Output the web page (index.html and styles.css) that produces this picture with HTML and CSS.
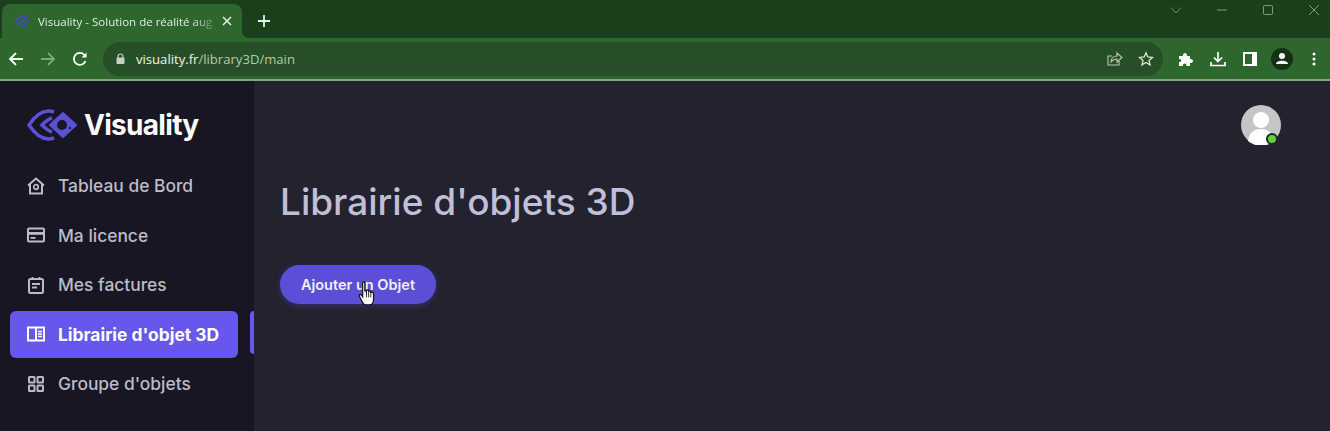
FILE: index.html
```html
<!DOCTYPE html>
<html lang="fr">
<head>
<meta charset="utf-8">
<title>Visuality</title>
<link rel="stylesheet" href="styles.css">
</head>
<body>
<div class="browser">
  <div class="tabstrip">
    <div class="tab">
      <svg class="favicon" width="16" height="12" viewBox="0 0 32 24"><path d="M2 12 C8 3 16 1 24 3 M2 12 C8 21 16 23 24 21" fill="none" stroke="#3f4fae" stroke-width="4"/><path d="M12 12 L21 5 L30 12 L21 19 Z" fill="#3f4fae"/><circle cx="21" cy="12" r="3" fill="#2d672d"/></svg>
      <span class="tab-title">Visuality - Solution de réalité aug</span>
      <svg class="tab-close" width="10" height="10" viewBox="0 0 10 10"><path d="M1 1 L9 9 M9 1 L1 9" stroke="#e8efe8" stroke-width="1.5"/></svg>
    </div>
    <svg class="newtab" width="14" height="14" viewBox="0 0 14 14"><path d="M7 1 V13 M1 7 H13" stroke="#e8efe8" stroke-width="1.8"/></svg>
    <div class="winctl">
      <svg width="12" height="12" viewBox="0 0 12 12"><path d="M1 3.500 L6 9 L11 3.500" fill="none" stroke="#6f8c6f" stroke-width="1"/></svg>
      <svg width="12" height="12" viewBox="0 0 12 12"><path d="M1 6 H11" stroke="#7f9c7f" stroke-width="1"/></svg>
      <svg width="12" height="12" viewBox="0 0 12 12"><rect x="1.500" y="1.500" width="9" height="9" rx="1" fill="none" stroke="#7f9c7f" stroke-width="1"/></svg>
      <svg width="12" height="12" viewBox="0 0 12 12"><path d="M1 1 L11 11 M11 1 L1 11" stroke="#7f9c7f" stroke-width="1"/></svg>
    </div>
  </div>
  <div class="toolbar">
    <div class="nav">
      <svg width="16" height="16" viewBox="0 0 16 16"><path d="M15 8 H2 M8 2 L2 8 L8 14" fill="none" stroke="#fff" stroke-width="1.800"/></svg>
      <svg width="16" height="16" viewBox="0 0 16 16"><path d="M1 8 H14 M8 2 L14 8 L8 14" fill="none" stroke="#7fa67f" stroke-width="1.800"/></svg>
      <svg width="16" height="16" viewBox="0 0 16 16"><path d="M13.500 10 A6 6 0 1 1 12.500 4 L14 5.500" fill="none" stroke="#fff" stroke-width="1.800"/><path d="M14.500 1.500 V6.500 H9.500 Z" fill="#fff"/></svg>
    </div>
    <div class="omnibox">
      <svg class="lock" width="9" height="11" viewBox="0 0 9 11"><path d="M2 5 V3.500 A2.500 2.500 0 0 1 7 3.500 V5" fill="none" stroke="#c4d2c4" stroke-width="1.200"/><rect x="0.500" y="4.500" width="8" height="6.500" rx="1" fill="#c4d2c4"/></svg>
      <span class="url"><span class="host">visuality.fr</span>/library3D/main</span>
      <svg class="omni-right" width="17" height="16" viewBox="0 0 17 16"><path d="M13 10 V14 H2 V5 H6 M5 11 C5 7 8 5 11 5 V2 L16 6.500 L11 11 V8 C8.500 8 6.500 9 5 11 Z" fill="none" stroke="#b9cbb9" stroke-width="1.100"/></svg>
      <svg class="omni-right star" width="16" height="16" viewBox="0 0 16 16"><path d="M8 1.800 L9.800 6 L14.400 6.400 L11 9.400 L12 13.900 L8 11.500 L4 13.900 L5 9.400 L1.600 6.400 L6.200 6 Z" fill="none" stroke="#dbe6db" stroke-width="1.300"/></svg>
    </div>
    <div class="tools">
      <span class="tool"><svg width="16" height="16" viewBox="0 0 16 16"><path d="M1 5 H5 C4.500 1 9.500 1 9 5 H12 V8 C16 7.500 16 12.500 12 12 V15 H8.500 C9 11.500 4.500 11.500 5 15 H1 V11 C4 11.500 4 7.500 1 8 Z" fill="#fff"/></svg></span>
      <span class="tool"><svg width="16" height="16" viewBox="0 0 16 16"><path d="M8 1 V10 M4 6.500 L8 10.500 L12 6.500 M1 11 V14.500 H15 V11" fill="none" stroke="#fff" stroke-width="1.700"/></svg></span>
      <span class="tool"><svg width="14" height="14" viewBox="0 0 14 14"><path d="M0 0 H14 V14 H0 Z M2 2 V12 H9 V2 Z" fill="#fff" fill-rule="evenodd"/></svg></span>
      <span class="tool"><svg width="22" height="22" viewBox="0 0 22 22"><circle cx="11" cy="11" r="11" fill="#143214"/><circle cx="11" cy="8" r="3" fill="#fff"/><path d="M5 16 C5 11.500 17 11.500 17 16 Z" fill="#fff"/></svg></span>
      <span class="tool"><svg width="4" height="14" viewBox="0 0 4 14"><circle cx="2" cy="2" r="1.500" fill="#fff"/><circle cx="2" cy="7" r="1.500" fill="#fff"/><circle cx="2" cy="12" r="1.500" fill="#fff"/></svg></span>
    </div>
  </div>
  <div class="app">
    <aside class="sidebar">
      <div class="brand">
        <svg width="50" height="32" viewBox="0 0 50 32"><path d="M27 3 C16 -1 8 7 2 16 C8 25 16 33 27 29" fill="none" stroke="#5b50d6" stroke-width="3.500"/><path d="M25 9 C21 10 18 13 15 16 C18 19 21 22 25 23" fill="none" stroke="#5b50d6" stroke-width="3.500"/><path d="M36 4 L49 16 L36 28 L23 16 Z" fill="#5b50d6" stroke="#5b50d6" stroke-width="2" stroke-linejoin="round"/><circle cx="35" cy="16" r="5" fill="#171622"/><circle cx="43" cy="19" r="1.200" fill="#171622"/></svg>
        <span class="brand-name">Visuality</span>
      </div>
      <nav class="menu">
        <a class="item">
          <svg width="18" height="18" viewBox="0 0 18 18"><path d="M1 8.500 L9 1.500 L17 8.500 M3 7 V16.500 H15 V7" fill="none" stroke="currentColor" stroke-width="2"/><circle cx="9" cy="10" r="2.300" fill="none" stroke="currentColor" stroke-width="1.700"/></svg>
          <span>Tableau de Bord</span>
        </a>
        <a class="item">
          <svg width="18" height="18" viewBox="0 0 18 18"><rect x="1" y="2.500" width="16" height="13" rx="1" fill="none" stroke="currentColor" stroke-width="2"/><rect x="1" y="6" width="16" height="2.800" fill="currentColor"/><rect x="3.500" y="11" width="5" height="1.800" fill="currentColor"/></svg>
          <span>Ma licence</span>
        </a>
        <a class="item">
          <svg width="18" height="18" viewBox="0 0 18 18"><rect x="2" y="3" width="14" height="14" rx="1.500" fill="none" stroke="currentColor" stroke-width="2"/><path d="M5.500 1 V4 M12.500 1 V4 M5 8 H13 M5 11.500 H10" stroke="currentColor" stroke-width="1.800"/></svg>
          <span>Mes factures</span>
        </a>
        <a class="item active">
          <svg width="18" height="18" viewBox="0 0 18 18"><rect x="1" y="2.500" width="16" height="13" fill="none" stroke="currentColor" stroke-width="2"/><path d="M9 2.500 V15.500" stroke="currentColor" stroke-width="2"/><path d="M11 6.500 H15 M11 9 H15 M11 11.500 H15" stroke="currentColor" stroke-width="1.400"/></svg>
          <span>Librairie d'objet 3D</span>
        </a>
        <a class="item">
          <svg width="18" height="18" viewBox="0 0 18 18"><g fill="none" stroke="currentColor" stroke-width="2"><rect x="2" y="2" width="5.500" height="5.500" rx="0.500"/><rect x="10.500" y="2" width="5.500" height="5.500" rx="0.500"/><rect x="2" y="10.500" width="5.500" height="5.500" rx="0.500"/><rect x="10.500" y="10.500" width="5.500" height="5.500" rx="0.500"/></g></svg>
          <span>Groupe d'objets</span>
        </a>
      </nav>
      <div class="marker"></div>
    </aside>
    <main class="main">
      <div class="topbar">
        <div class="avatar">
          <svg width="40" height="40" viewBox="0 0 40 40"><circle cx="20" cy="20" r="20" fill="#c5c5c8"/><circle cx="20" cy="15" r="8" fill="#fff"/><path d="M7 36 C8 27 14 24 20 24 C26 24 32 27 33 36 A20 20 0 0 1 7 36 Z" fill="#fff"/></svg>
          <span class="status"></span>
        </div>
      </div>
      <h1 class="title">Librairie d'objets 3D</h1>
      <button class="add">Ajouter un Objet
        <svg class="cursor" width="18" height="25" viewBox="0 0 16 23"><path d="M4 1.500 C4 0.500 6 0.500 6 1.500 V9 L7.500 9 C7.500 8 9.500 8 9.500 9 V10 C9.500 9 11.500 9 11.500 10 V11 C11.500 10 14 10 14 11.500 V17 C14 20 12.500 22 10 22 H7.500 C5.500 22 4.500 21 3.500 19 L1 14 C0.500 12.500 2 12 3 13 L4 14.500 Z" fill="#fff" stroke="#111" stroke-width="1.100"/><path d="M7.500 9 V15 M9.500 10 V15 M11.500 11 V15" stroke="#111" stroke-width="0.800"/></svg>
      </button>
    </main>
  </div>
</div>
</body>
</html>
```
FILE: styles.css
```css
* { box-sizing: border-box; }
html, body { margin: 0; padding: 0; height: 100%; overflow: hidden; }
body { font-family: "Inter", "Liberation Sans", sans-serif; background: #23222f; }
.browser { width: 1330px; height: 431px; display: flex; flex-direction: column; }

.tabstrip { height: 38px; background: #1a3f1a; display: flex; align-items: flex-end; padding-left: 2px; flex: none; }
.tab { position: relative; width: 240px; height: 34px; background: #2d672d; border-radius: 8px 8px 0 0; display: flex; align-items: center; padding-left: 13px; font: 11.500px "Open Sans", "Liberation Sans", sans-serif; color: #e4ece4; }
.tab::after { content: ""; position: absolute; right: -8px; bottom: 0; width: 8px; height: 8px; background: radial-gradient(circle at 100% 0, transparent 8px, #2d672d 8.500px); }
.favicon { flex: none; margin-right: 7px; }
.tab-title { width: 175px; white-space: nowrap; -webkit-mask-image: linear-gradient(90deg, #000 88%, rgba(0, 0, 0, .25)); mask-image: linear-gradient(90deg, #000 88%, rgba(0, 0, 0, .25)); }
.tab-close { margin-left: 9px; flex: none; }
.newtab { margin: 0 0 10px 15px; }
.winctl { margin-left: auto; display: flex; align-items: center; gap: 34px; align-self: flex-start; padding: 4px 10px 0 0; }

.toolbar { height: 43px; flex: none; background: #2d672d; border-bottom: 2px solid #7fa87f; display: flex; align-items: center; padding-left: 8px; }
.nav { display: flex; align-items: center; gap: 16px; }
.nav svg { flex: none; }
.omnibox { width: 1062px; height: 34px; margin-left: 15px; border-radius: 17px; background: #274f27; display: flex; align-items: center; padding-left: 13px; }
.lock { flex: none; }
.url { margin-left: 11px; font: 13.100px "Open Sans", "Liberation Sans", sans-serif; color: #b4c8b4; }
.host { color: #f0f5f0; }
.omni-right { margin-left: auto; flex: none; }
.star { margin-left: 15px; margin-right: 9px; }
.tools { display: flex; align-items: center; margin-left: 7px; }
.tool { width: 32px; display: flex; justify-content: center; }

.app { flex: 1; display: flex; min-height: 0; }
.sidebar { width: 254px; flex: none; background: #171622; padding: 0 16px 0 10px; position: relative; }
.brand { display: flex; align-items: center; gap: 7px; padding: 14px 0 0 17px; height: 74px; }
.brand-name { font-size: 28px; font-weight: 700; color: #fff; letter-spacing: -0.700px; }
.menu { display: flex; flex-direction: column; gap: 2.600px; margin-top: 7px; }
.item { height: 47px; border-radius: 6px; display: flex; align-items: center; gap: 13px; padding-left: 17px; font-size: 17.400px; font-weight: 500; color: #bcbcc8; }
.item svg { flex: none; }
.item.active { background: #6658ee; color: #fff; font-weight: 700; }
.marker { position: absolute; right: 0; top: 230px; width: 4px; height: 43px; background: #6658ee; border-radius: 4px 0 0 4px; }

.main { flex: 1; padding: 0 0 0 26px; }
.topbar { display: flex; justify-content: flex-end; padding: 24px 49px 0 0; }
.avatar { position: relative; width: 40px; height: 40px; }
.avatar svg { display: block; }
.status { position: absolute; right: 3px; bottom: 0; width: 12px; height: 12px; border-radius: 50%; background: #5ed32f; border: 2px solid #23222f; }
.title { margin: 33px 0 0; font-size: 37px; line-height: 48px; font-weight: 500; color: #c0bfd9; }
.add { position: relative; margin-top: 39px; display: block; width: 156px; height: 39px; border: 0; border-radius: 20px; background: #5a4fd6; color: #f0effa; font: 600 14.500px "Inter", sans-serif; box-shadow: 0 2px 6px rgba(90, 79, 214, .35); }
.cursor { position: absolute; left: 78px; top: 16px; }
```
